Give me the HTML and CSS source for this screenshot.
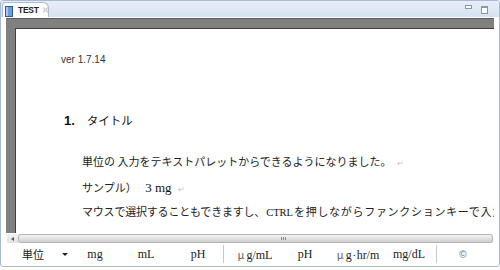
FILE: index.html
```html
<!DOCTYPE html>
<html lang="ja">
<head>
    <meta charset="UTF-8">
    <title>TEST</title>
    <link rel="stylesheet" href="styles.css">
</head>
<body>
    <div class="window">
        <div class="tabbar">
            <div class="tab">
                <svg class="tab-icon" width="8" height="11" viewBox="0 0 8 11">
                    <rect x="0.5" y="0.5" width="7" height="10" fill="#6e9bd8" stroke="#2c5896"/>
                    <rect x="1" y="1" width="2" height="9" fill="#a9c6ee"/>
                </svg>
                <span class="tab-title">TEST</span>
                <svg class="tab-close" width="8" height="8" viewBox="0 0 8 8">
                    <path d="M0.5 1.5 L1.5 0.5 L4 3 L6.5 0.5 L7.5 1.5 L5 4 L7.5 6.5 L6.5 7.5 L4 5 L1.5 7.5 L0.5 6.5 L3 4 Z" fill="#fff" stroke="#9a9a9a" stroke-width="0.8"/>
                </svg>
            </div>
            <div class="view-controls">
                <span class="btn-min"></span>
                <span class="btn-max"></span>
            </div>
        </div>

        <div class="content">
            <div class="editor">
                <div class="page">
                    <p class="version">ver 1.7.14</p>
                    <h1 class="heading"><span class="num">1.</span>タイトル</h1>
                    <p class="line first">単位の 入力をテキストパレットからできるようになりました。<span class="ret">↵</span></p>
                    <p class="line second">サンプル）　<span class="latin big">3 mg</span><span class="ret">↵</span></p>
                    <p class="line third">マウスで選択することもできますし、<span class="latin">CTRL</span><span class="wide">を押しながらファンクションキーで入力</span></p>
                </div>
            </div>

            <div class="hscroll">
                <div class="arrow"></div>
                <div class="thumb"><span class="grip"></span></div>
            </div>

            <div class="toolbar">
                <div class="unit-select"><span class="unit-label">単位</span><span class="caret"></span></div>
                <span class="unit">mg</span>
                <span class="unit">mL</span>
                <span class="unit">pH</span>
                <span class="sep"></span>
                <span class="unit"><span class="mu">μ</span>g/mL</span>
                <span class="unit">pH</span>
                <span class="unit"><span class="mu">μ</span>g<span class="dot">･</span>hr/m</span>
                <span class="unit">mg/dL</span>
                <span class="sep"></span>
                <span class="unit copy">©</span>
            </div>
        </div>
    </div>
</body>
</html>
```

FILE: styles.css
```css
body {
    margin: 0;
    background-color: #fff;
    font-family: "Noto Sans CJK JP", sans-serif;
}

.window {
    width: 500px;
    height: 267px;
    box-sizing: border-box;
    border: 1px solid #a9bbd3;
    border-radius: 3px;
    background-color: #fff;
    overflow: hidden;
    display: flex;
    flex-direction: column;
}

/* tab strip */
.tabbar {
    height: 16px;
    flex: none;
    background: linear-gradient(#e8eef8, #d6e2f1);
    display: flex;
    justify-content: space-between;
    align-items: flex-end;
}

.tab {
    margin-left: 1px;
    width: 47px;
    height: 15px;
    box-sizing: border-box;
    background-color: #fff;
    border: 1px solid #a9bbd3;
    border-bottom: none;
    border-radius: 3px 6px 0 0;
    display: flex;
    align-items: center;
    padding-left: 2px;
}

.tab-icon {
    flex: none;
    margin-top: 2px;
}

.tab-title {
    margin-left: 5px;
    font: bold 8.5px "Liberation Sans", sans-serif;
    letter-spacing: -0.3px;
    color: #222;
}

.tab-close {
    margin-left: 4px;
}

.view-controls {
    align-self: flex-start;
    display: flex;
    gap: 9px;
    padding-top: 3px;
    margin-right: 11px;
}

.btn-min {
    margin-top: 1px;
    width: 7px;
    height: 4px;
    box-sizing: border-box;
    border: 1px solid #8797ad;
    background-color: #fff;
}

.btn-max {
    margin-top: 2px;
    width: 7px;
    height: 8px;
    box-sizing: border-box;
    border: 1px solid #8797ad;
    border-top-width: 2px;
    background-color: #fff;
}

/* editor */
.content {
    flex: 1;
    padding: 1px 5px 0 5px;
    display: flex;
    flex-direction: column;
}

.editor {
    height: 215px;
    box-sizing: border-box;
    background-color: #808080;
    border-top: 1px solid #5c5c5c;
    padding: 9px 0 0 9px;
    display: flex;
    flex-direction: column;
    overflow: hidden;
}

.page {
    flex: 1;
    background-color: #fff;
    border-top: 1px solid #404040;
    border-left: 1px solid #404040;
    padding-left: 45px;
    overflow: hidden;
    white-space: nowrap;
}

.version {
    margin: 0;
    padding-top: 25px;
    font: 10px/12px "Liberation Sans", sans-serif;
    color: #333;
}

.heading {
    margin: 45px 0 0 3px;
    font-size: 11.5px;
    line-height: 18px;
    font-weight: normal;
    color: #111;
}

.heading .num {
    font: bold 13px "Liberation Sans", sans-serif;
    margin-right: 12px;
}

.line {
    margin: 0;
    padding-left: 21px;
    font-size: 11px;
    line-height: 20px;
    color: #222;
}

.line.first {
    margin-top: 22px;
}

.line.second {
    margin-top: 4px;
}

.line.third {
    margin-top: 2px;
    letter-spacing: -0.2px;
}

.latin {
    font-family: "Liberation Serif", serif;
    font-size: 10.5px;
    color: #111;
    letter-spacing: 0;
    margin: 0 1px;
}

.latin.big {
    font-size: 13px;
    margin-left: 3px;
}

.wide {
    letter-spacing: 0.7px;
}

.ret {
    margin-left: 5px;
    font-size: 8px;
    color: #c4c4c4;
    letter-spacing: 0;
}

/* horizontal scrollbar */
.hscroll {
    height: 9px;
    margin: 1px 1px 0 1px;
    display: flex;
    background: linear-gradient(#f2f2f2, #e1e1e1);
}

.arrow {
    width: 11px;
    display: flex;
    align-items: center;
    justify-content: center;
}

.arrow::before {
    content: "";
    border-top: 2px solid transparent;
    border-bottom: 2px solid transparent;
    border-right: 3px solid #555;
}

.thumb {
    flex: 1;
    border: 1px solid #b4b4b4;
    border-radius: 3px;
    background: linear-gradient(#f5f5f5, #d0d0d0);
    display: flex;
    align-items: center;
    padding-left: 262px;
}

.grip {
    width: 5px;
    height: 3px;
    background: repeating-linear-gradient(90deg, #8a8a8a 0 1px, transparent 1px 2px);
}

/* unit toolbar */
.toolbar {
    height: 22px;
    padding-left: 2px;
    display: grid;
    grid-template-columns: 66px 42px 60px 44px 6px 58px 42px 64px 38px 16px 38px;
    align-items: center;
    font: 12px "Liberation Serif", serif;
    color: #222;
}

.unit-select {
    display: flex;
    align-items: center;
    padding-left: 14px;
}

.unit-label {
    font: 11px "Noto Sans CJK JP", sans-serif;
    color: #222;
}

.caret {
    margin-left: 18px;
    border-left: 3px solid transparent;
    border-right: 3px solid transparent;
    border-top: 3px solid #222;
}

.unit {
    text-align: center;
}

.mu {
    font: 11px "Noto Sans CJK JP", sans-serif;
    color: #666;
    margin-right: 2px;
}

.dot {
    font-size: 9px;
}

.unit.copy {
    font: bold 10px "Liberation Sans", sans-serif;
    color: #888;
}

.sep {
    justify-self: center;
    width: 1px;
    height: 18px;
    background-color: #c9c9c9;
}
```
